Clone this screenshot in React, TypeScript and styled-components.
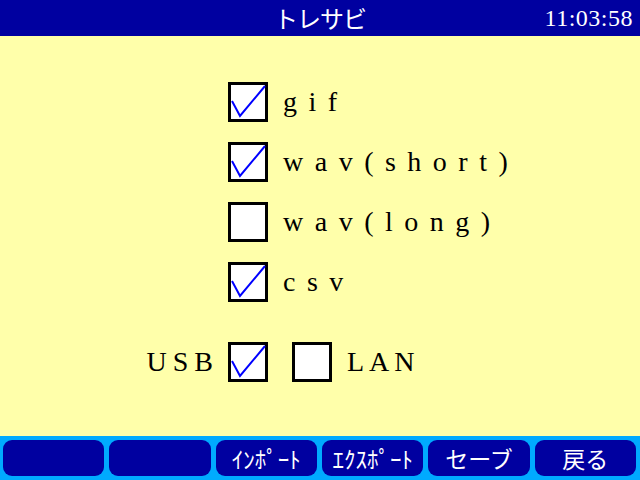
import React from "react";
import styled, { createGlobalStyle } from "styled-components";

const Global = createGlobalStyle`
  html, body { margin: 0; padding: 0; }
  body { width: 640px; height: 480px; overflow: hidden; background: #ffffaa; }
`;

const Screen = styled.div`
  width: 640px;
  height: 480px;
  display: flex;
  flex-direction: column;
  background: #ffffaa;
`;

const Header = styled.header`
  height: 36px;
  background: #0000a0;
  color: #fff;
  display: grid;
  grid-template-columns: 1fr auto 1fr;
  align-items: center;
`;

const Title = styled.div`
  grid-column: 2;
  font-family: "Noto Sans CJK JP", "Noto Sans", sans-serif;
  font-size: 24px;
  letter-spacing: -1px;
  line-height: 36px;
`;

const Clock = styled.div`
  grid-column: 3;
  justify-self: end;
  padding-right: 7px;
  font-family: "Liberation Serif", serif;
  font-size: 24px;
  letter-spacing: 0.5px;
  line-height: 36px;
`;

const Main = styled.main`
  flex: 1;
  display: grid;
  grid-template-columns: 66px 40px auto;
  column-gap: 15px;
  row-gap: 20px;
  align-content: start;
  padding: 46px 0 0 147px;
`;

const Spacer = styled.div`
  grid-column: 1 / -1;
  height: 0;
`;

const Box = styled.div`
  width: 34px;
  height: 34px;
  border: 3px solid #000;
  background: #fff;
  position: relative;
`;

const Mark = styled.svg`
  position: absolute;
  left: 0;
  top: 0;
  overflow: visible;
`;

const Label = styled.span<{ $spacing?: number }>`
  font-family: "Liberation Serif", serif;
  font-size: 28px;
  letter-spacing: ${(p) => p.$spacing ?? 11.5}px;
  color: #000;
  display: flex;
  align-items: center;
  height: 40px;
  white-space: nowrap;
`;

const SideLabel = styled(Label)`
  margin-right: -6px;
  justify-content: flex-end;
`;

const Group = styled.div`
  display: flex;
  align-items: center;
  gap: 15px;
  margin-left: 9px;
`;

const Footer = styled.footer`
  height: 44px;
  background: #00aaff;
  display: flex;
  gap: 5px;
  padding: 4px 4px 4px 3px;
  box-sizing: border-box;
`;

const Btn = styled.div`
  flex: 1;
  background: #0000a0;
  border-radius: 9px;
  color: #fff;
  display: flex;
  align-items: center;
  justify-content: center;
  font-family: "Noto Sans CJK JP", "Noto Sans", sans-serif;
  font-size: 23px;
  line-height: 1;
`;

const Check = ({ on }: { on: boolean }) => (
  <Box>
    {on && (
      <Mark width="34" height="34" viewBox="0 0 34 34">
        <polyline
          points="1,16 9,31 34,1"
          fill="none"
          stroke="#0000ff"
          strokeWidth="2"
        />
      </Mark>
    )}
  </Box>
);

const rows: [string, boolean][] = [
  ["gif", true],
  ["wav(short)", true],
  ["wav(long)", false],
  ["csv", true],
];

export default function App() {
  return (
    <Screen>
      <Global />
      <Header>
        <Title>トレサビ</Title>
        <Clock>11:03:58</Clock>
      </Header>
      <Main>
        {rows.map(([t, on]) => (
          <React.Fragment key={t}>
            <span />
            <Check on={on} />
            <Label>{t}</Label>
          </React.Fragment>
        ))}
        <Spacer />
        <SideLabel $spacing={6}>USB</SideLabel>
        <Check on={true} />
        <Group>
          <Check on={false} />
          <Label $spacing={5}>LAN</Label>
        </Group>
      </Main>
      <Footer>
        <Btn />
        <Btn />
        <Btn>ｲﾝﾎﾟｰﾄ</Btn>
        <Btn>ｴｸｽﾎﾟｰﾄ</Btn>
        <Btn>セーブ</Btn>
        <Btn>戻る</Btn>
      </Footer>
    </Screen>
  );
}
